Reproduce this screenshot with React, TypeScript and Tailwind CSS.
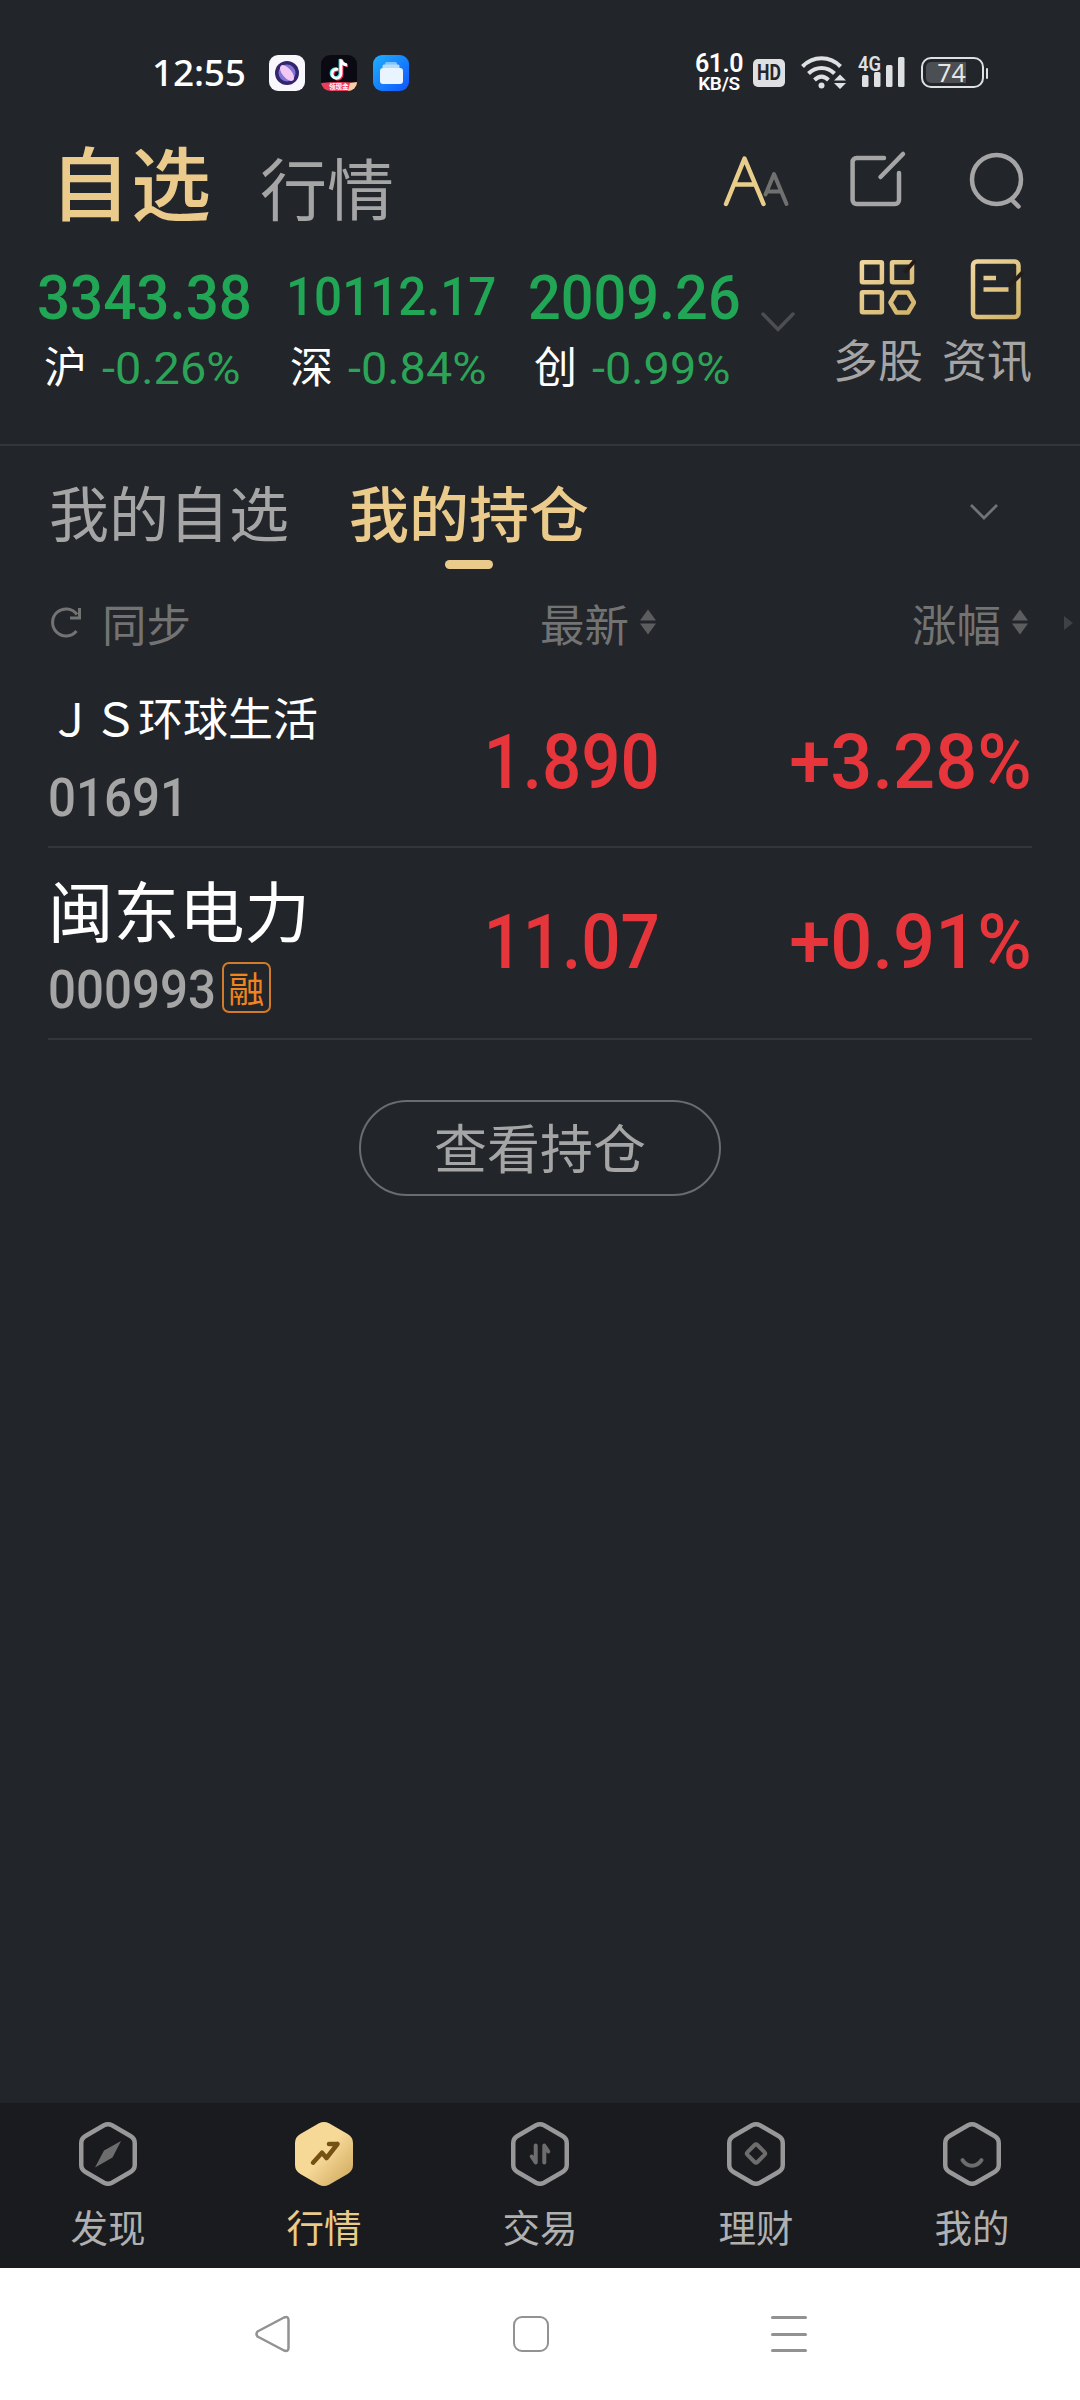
import type { ReactNode } from "react";
import clsx from "clsx";

const indexes = [
    { name: "沪", value: "3343.38", change: "-0.26%", col: "ml-[37px] w-[247px]", val: "text-[62px] mt-[7px] scale-x-[0.94]", label: "ml-[7px]" },
    { name: "深", value: "10112.17", change: "-0.84%", col: "w-[244px]", val: "text-[54px] mt-[10px] mb-[5px] ml-[2px] scale-x-[0.915]", label: "ml-[6px]" },
    { name: "创", value: "2009.26", change: "-0.99%", col: "w-[233px]", val: "text-[62px] mt-[7px] scale-x-[0.93]", label: "ml-[6px]" },
];

const holdings = [
    { name: "ＪＳ环球生活", code: "01691", price: "1.890", change: "+3.28%", margin: false },
    { name: "闽东电力", code: "000993", price: "11.07", change: "+0.91%", margin: true },
];

function Num({ className, children }: { className?: string; children: ReactNode }) {
    return (
        <span className={clsx("inline-block whitespace-nowrap leading-none font-[Roboto,sans-serif]", className)}>
            {children}
        </span>
    );
}

function StatusBar() {
    return (
        <div className="flex h-[132px] shrink-0 items-center pt-[14px]">
            <span className="ml-[152px] mt-[-3px] w-[117px] font-['Noto_Sans',sans-serif] text-[37px] font-medium leading-none tracking-[-0.2px] text-white">12:55</span>
            <svg width="36" height="36" viewBox="0 0 36 36">
                <rect width="36" height="36" rx="9" fill="#f8f7fb" />
                <circle cx="18" cy="18" r="12" fill="#33246b" />
                <circle cx="18" cy="18" r="8.500" fill="#7f74d8" />
                <ellipse cx="18" cy="18" rx="9.500" ry="4.600" fill="#f3c9f3" transform="rotate(50 18 18)" />
            </svg>
            <svg className="ml-4" width="36" height="36" viewBox="0 0 36 36">
                <defs>
                    <clipPath id="tile">
                        <rect width="36" height="36" rx="9" />
                    </clipPath>
                </defs>
                <g clipPath="url(#tile)">
                    <rect width="36" height="36" fill="#0b0a12" />
                    <g fill="none" strokeWidth="2.800">
                        <path d="M17 14.500a4.500 4.500 0 1 0 3 4.500V4.500c.6 3.500 2.500 5 6 5.500" stroke="#ff2e55" transform="translate(1 .8)" />
                        <path d="M17 14.500a4.500 4.500 0 1 0 3 4.500V4.500c.6 3.500 2.500 5 6 5.500" stroke="#35e0e0" transform="translate(-1 -.6)" />
                        <path d="M17 14.500a4.500 4.500 0 1 0 3 4.500V4.500c.6 3.500 2.500 5 6 5.500" stroke="#fff" />
                    </g>
                    <path d="M0 28C12 26.500 24 26.500 36 28v8H0z" fill="#e8405c" />
                    <path d="M29 28l7-1v9h-9z" fill="#f6cfa5" />
                </g>
                <text x="8" y="34" fontSize="6.500" fontWeight="700" fill="#fff" fontFamily="Noto Sans CJK SC, sans-serif">领现金</text>
            </svg>
            <svg className="ml-4" width="36" height="36" viewBox="0 0 36 36">
                <defs>
                    <linearGradient id="files" x1="0" y1="0" x2="1" y2="1">
                        <stop offset="0" stopColor="#1fb0ff" />
                        <stop offset="1" stopColor="#0f55fb" />
                    </linearGradient>
                </defs>
                <rect width="36" height="36" rx="9" fill="url(#files)" />
                <rect x="12" y="7" width="12" height="4" rx="1.500" fill="#7fc4ff" />
                <rect x="9.500" y="9.500" width="17" height="5" rx="1.500" fill="#b4dcff" />
                <rect x="7" y="13" width="23" height="16" rx="3" fill="#eaf4ff" />
            </svg>

            <div className="ml-[285px] flex w-[50px] flex-col items-center font-[Roboto,sans-serif] font-semibold text-white">
                <span className="text-[25px] leading-[20px] tracking-[-0.5px]">61.0</span>
                <span className="mt-[2px] text-[19px] leading-[16px] tracking-[-0.3px]">KB/S</span>
            </div>
            <div className="ml-[9px] flex h-7 w-8 items-center justify-center rounded-[5px] bg-[#dfe0e1]">
                <span className="inline-block scale-x-[0.8] font-[Roboto,sans-serif] text-[22px] font-bold leading-none text-[#22252a]">HD</span>
            </div>
            <svg className="ml-4" width="45" height="36" viewBox="0 0 45 36">
                <g fill="none" stroke="#dfe0e1" strokeWidth="4">
                    <path d="M1.500 11.500C12 .5 29 .5 39.500 11.500" />
                    <path d="M7.500 18.500C15 11 26 11 33.500 18.500" />
                    <path d="M13.500 25C18 20.700 23 20.700 27.500 25" />
                </g>
                <circle cx="20.500" cy="30.500" r="3" fill="#dfe0e1" />
                <path d="M33 25.500l6-6 6 6zM33 28l6 6 6-6z" fill="#dfe0e1" />
            </svg>
            <svg className="ml-[12px] overflow-visible" width="48" height="36" viewBox="0 0 48 36">
                <text x="0" y="16" fontSize="21" fontWeight="600" fill="#dfe0e1" textLength="23" lengthAdjust="spacingAndGlyphs" fontFamily="Roboto, sans-serif">4G</text>
                <g fill="#dfe0e1">
                    <rect x="4" y="20" width="6.500" height="12" rx="1.500" />
                    <rect x="16" y="17" width="6.500" height="15" rx="1.500" />
                    <rect x="28" y="10" width="6.500" height="22" rx="1.500" />
                    <rect x="40" y="2" width="6.500" height="30" rx="1.500" />
                </g>
            </svg>
            <div className="ml-[15px] mt-[-1px] flex h-[31px] w-[63px] items-center rounded-[10px] border-2 border-[#dfe0e1] p-[3px]">
                <div className="flex h-full w-[40px] items-center justify-center rounded-l-[5px] bg-[#4b4e52] pl-[11px]">
                    <span className="font-['Noto_Sans',sans-serif] text-[25px] leading-none text-[#e6e6e6]">74</span>
                </div>
            </div>
            <div className="ml-[2px] h-[11px] w-[2px] rounded bg-[#dfe0e1]" />
        </div>
    );
}

function Header() {
    return (
        <div className="flex h-[128px] shrink-0 items-start">
            <h1 className="ml-[50px] mt-[7px] w-[210px] text-[80px] font-medium leading-none tracking-[1px] text-[#ebcb8b]">自选</h1>
            <span className="mt-[20px] w-[462px] text-[67px] leading-none text-[#a5a5a5]">行情</span>
            <svg className="mt-[20px]" width="68" height="58" viewBox="0 0 68 58" fill="none" strokeWidth="4" strokeLinecap="round" strokeLinejoin="round">
                <path d="M45 39.500h14M43.500 42.500L52 22l12.500 30" stroke="#70716f" />
                <path d="M4 52L22.500 6.500 41.500 52M12 32.500h21" stroke="#e8cd8b" strokeWidth="4.500" />
            </svg>
            <svg className="ml-[59px] mt-[17px]" width="60" height="62" viewBox="0 0 60 62" fill="none" stroke="#a5a5a5" strokeWidth="4.500" strokeLinecap="round">
                <path d="M35 9H7.600a4 4 0 0 0-4 4v38a4 4 0 0 0 4 4H46a4 4 0 0 0 4-4V24" />
                <path d="M31.500 28L54 5" />
            </svg>
            <svg className="ml-[57px] mt-[17px]" width="60" height="64" viewBox="0 0 60 64" fill="none" stroke="#a5a5a5" strokeWidth="4.500" strokeLinecap="round">
                <circle cx="30.500" cy="30.500" r="24.500" />
                <path d="M45.500 50.500l7 7" />
            </svg>
        </div>
    );
}

function IndexBar() {
    return (
        <div className="flex h-[186px] shrink-0 items-start border-b-2 border-[#33373c]">
            {indexes.map((idx) => (
                <div key={idx.name} className={clsx("flex shrink-0 flex-col items-start", idx.col)}>
                    <Num className={clsx("origin-left font-medium text-[#20a654]", idx.val)}>{idx.value}</Num>
                    <div className={clsx("mt-[14px] flex items-start", idx.label)}>
                        <span className="w-[58px] text-[43px] leading-none text-white">{idx.name}</span>
                        <Num className="mt-[3px] origin-left scale-x-[1.04] text-[45px] text-[#2ba457]">{idx.change}</Num>
                    </div>
                </div>
            ))}
            <svg className="mt-[51px]" width="34" height="22" viewBox="0 0 34 22" fill="none" stroke="#4c4e51" strokeWidth="3.500" strokeLinecap="round">
                <path d="M2 3l15 15.500L32 3" />
            </svg>
            <div className="ml-[39px] flex w-[88px] flex-col items-center">
                <svg className="ml-[18px] mt-[-2px]" width="58" height="60" viewBox="0 0 58 60" fill="none" strokeWidth="4.500">
                    <defs>
                        <linearGradient id="gold" gradientUnits="userSpaceOnUse" x1="0" y1="0" x2="58" y2="60">
                            <stop offset="0" stopColor="#f3d8a4" />
                            <stop offset="1" stopColor="#cfb265" />
                        </linearGradient>
                    </defs>
                    <g stroke="url(#gold)" strokeLinejoin="round">
                        <rect x="3.900" y="4.250" width="20" height="20" rx="1" />
                        <rect x="34" y="4.250" width="20" height="20" rx="1" />
                        <rect x="3.900" y="34.250" width="20" height="20" rx="1" />
                        <path d="M38.500 34.500H50l6 10-6 10H38.500l-6-10z" />
                    </g>
                    <path d="M46.500 14.500L57 2.500" stroke="#241a1a" strokeWidth="4" />
                </svg>
                <span className="mt-[18px] whitespace-nowrap text-[45px] leading-none text-[#a5a5a5]">多股</span>
            </div>
            <div className="ml-[21px] flex w-[88px] flex-col items-center">
                <svg className="ml-[16px] mt-[-2px]" width="60" height="64" viewBox="0 0 60 64" fill="none" stroke="url(#gold)" strokeWidth="4.500">
                    <rect x="8" y="3.500" width="45.500" height="55.500" rx="4" />
                    <path d="M18.500 20H31M18.500 31.500h25" />
                    <path d="M44 28L58 14" stroke="#241f1a" strokeWidth="4" />
                </svg>
                <span className="mt-[14px] whitespace-nowrap text-[45px] leading-none text-[#a5a5a5]">资讯</span>
            </div>
        </div>
    );
}

function SortLabel({ children, className }: { children: ReactNode; className?: string }) {
    return (
        <div className={clsx("flex items-center justify-end", className)}>
            <span className="mt-[-2px] text-[44.500px] leading-none">{children}</span>
            <svg className="ml-[11px] mt-[-4px]" width="16" height="26" viewBox="0 0 16 26" fill="#5c5d5f">
                <path d="M8 .5l8 11H0zM8 25.500l8-11H0z" />
            </svg>
        </div>
    );
}

function Holdings() {
    return (
        <>
            <div className="flex h-[130px] shrink-0 items-start pl-[49px]">
                <span className="mt-[35px] w-[300px] text-[60px] leading-none text-[#a5a5a5]">我的自选</span>
                <div className="mt-[35px] flex flex-col items-center">
                    <span className="text-[60px] font-medium leading-none text-[#ebcb8b]">我的持仓</span>
                    <span className="mt-[19px] h-[9px] w-[48px] rounded-full bg-[#ebcb8b]" />
                </div>
                <svg className="ml-[380px] mt-[57px]" width="30" height="20" viewBox="0 0 30 20" fill="none" stroke="#717376" strokeWidth="2.800">
                    <path d="M2 2l13 13L28 2" />
                </svg>
            </div>

            <div className="flex h-[96px] shrink-0 items-center text-[#737373]">
                <svg className="ml-[50px] mt-[-4px]" width="34" height="32" viewBox="0 0 34 32" fill="none" stroke="#737373" strokeWidth="3">
                    <path d="M26.500 25A13.500 13.500 0 1 1 27 8.500" />
                    <path d="M29.500 2v10H20" />
                </svg>
                <span className="ml-[18px] mt-[-2px] w-[200px] text-[44.500px] leading-none">同步</span>
                <SortLabel className="w-[354px]">最新</SortLabel>
                <SortLabel className="w-[372px]">涨幅</SortLabel>
                <svg className="ml-[36px] mt-[-2px]" width="10" height="14" viewBox="0 0 10 14" fill="#3f4245">
                    <path d="M0 0l9 7-9 7z" />
                </svg>
            </div>

            {holdings.map((item) => (
                <div
                    key={item.code}
                    className={clsx(
                        "mx-[48px] flex shrink-0 items-start border-b-2 border-[#33373c]",
                        item.margin ? "h-[192px]" : "h-[176px]"
                    )}
                >
                    <div className="w-[346px] shrink-0">
                        <div className={clsx("whitespace-nowrap leading-none text-white", item.margin ? "mt-[28px] text-[65.500px]" : "mt-[22px] text-[45px]")}>
                            {item.name}
                        </div>
                        <div className={clsx("flex items-start", item.margin ? "mt-[22px]" : "mt-[33px]")}>
                            <Num className="origin-left scale-x-[0.93] text-[53px] font-medium text-[#a5a5a5]">{item.code}</Num>
                            {item.margin && (
                                <span className="ml-[-7px] mt-[-2px] flex h-[51px] w-[49px] items-center justify-center rounded-[7px] border-2 border-[#d07c2c] pb-[1px] text-[36px] leading-none text-[#f0841f]">
                                    融
                                </span>
                            )}
                        </div>
                    </div>
                    <div className={clsx("flex w-[266px] justify-end", item.margin ? "mt-[56px]" : "mt-[52px]")}>
                        <Num className="origin-right scale-x-[0.91] text-[76px] font-medium text-[#e7353c]">{item.price}</Num>
                    </div>
                    <div className={clsx("flex w-[372px] justify-end", item.margin ? "mt-[56px]" : "mt-[52px]")}>
                        <Num className="origin-right scale-x-[0.975] text-[76px] font-medium text-[#e7353c]">{item.change}</Num>
                    </div>
                </div>
            ))}

            <button className="mx-auto mt-[60px] flex h-[96px] w-[362px] shrink-0 items-center justify-center rounded-full border-2 border-[#6a6c6f] pb-[3px] text-[53px] leading-none text-[#a5a5a5]">
                查看持仓
            </button>
        </>
    );
}

const HEX = "M26 3.300Q30 1.300 34 3.300L52.500 14Q56.750 16.500 56.750 21V43Q56.750 47.500 52.500 50L34 60.700Q30 62.700 26 60.700L7.500 50Q3.250 47.500 3.250 43V21Q3.250 16.500 7.500 14Z";

const tabs = [
    { name: "发现", icon: <path d="M43 19L34.500 35.500 17 45.500 26 28.500z" fill="#6d6d6d" /> },
    { name: "行情", icon: <path d="M19 40.700l9-10 4.500 5.300L43.500 22M35 22h8.500" stroke="#755113" strokeWidth="4.500" strokeLinecap="round" strokeLinejoin="round" /> },
    { name: "交易", icon: <path d="M25.700 23.500v17l-4-6M34.300 40.500v-17l4 6" stroke="#6d6d6d" strokeWidth="4" strokeLinecap="round" strokeLinejoin="round" /> },
    { name: "理财", icon: <rect x="23" y="24.500" width="14" height="14" rx="2" transform="rotate(45 30 31.5)" stroke="#6d6d6d" strokeWidth="4" /> },
    { name: "我的", icon: <path d="M20.500 38.200c5 7.500 14 7.500 19 0" stroke="#6d6d6d" strokeWidth="4" strokeLinecap="round" /> },
];

function TabBar() {
    const active = "行情";
    return (
        <div className="mt-auto grid h-[165px] shrink-0 grid-cols-5 bg-[#1a1b1e]">
            {tabs.map((tab) => (
                <div key={tab.name} className="flex flex-col items-center pt-[19px]">
                    <svg width="60" height="64" viewBox="0 0 60 64" fill="none">
                        <defs>
                            <linearGradient id="hex" x1="0" y1="0" x2="1" y2="1">
                                <stop offset="0.500" stopColor="#f6d897" />
                                <stop offset="1" stopColor="#cfa85c" />
                            </linearGradient>
                        </defs>
                        <path
                            d={HEX}
                            fill={tab.name === active ? "url(#hex)" : "none"}
                            stroke={tab.name === active ? "url(#hex)" : "#989898"}
                            strokeWidth="4.500"
                        />
                        {tab.icon}
                    </svg>
                    <span className={clsx("mt-[21px] text-[37.500px] leading-none", tab.name === active ? "text-[#ebcb8b]" : "text-[#b0b0b0]")}>{tab.name}</span>
                </div>
            ))}
        </div>
    );
}

function SystemNav() {
    return (
        <div className="flex h-[132px] shrink-0 items-center bg-white">
            <svg className="ml-[254px]" width="40" height="40" viewBox="0 0 40 40" fill="none" stroke="#929292" strokeWidth="2.500" strokeLinejoin="round">
                <path d="M3.500 17.500L30 3.500Q34.500 2 34.500 6V34Q34.500 38 30 36.500L3.500 22.500Q1.500 20 3.500 17.500Z" />
            </svg>
            <div className="ml-[219px] h-[36px] w-[36px] rounded-[9px] border-[2.500px] border-[#929292]" />
            <div className="ml-[222px] flex h-[36px] w-[36px] flex-col justify-between">
                <div className="h-[3px] rounded bg-[#929292]" />
                <div className="h-[3px] rounded bg-[#929292]" />
                <div className="h-[3px] rounded bg-[#929292]" />
            </div>
        </div>
    );
}

export default function App() {
    return (
        <div className="flex h-[2400px] w-[1080px] flex-col overflow-hidden bg-[#22252a] font-['Noto_Sans_CJK_SC',sans-serif]">
            <StatusBar />
            <Header />
            <IndexBar />
            <Holdings />
            <TabBar />
            <SystemNav />
        </div>
    );
}
